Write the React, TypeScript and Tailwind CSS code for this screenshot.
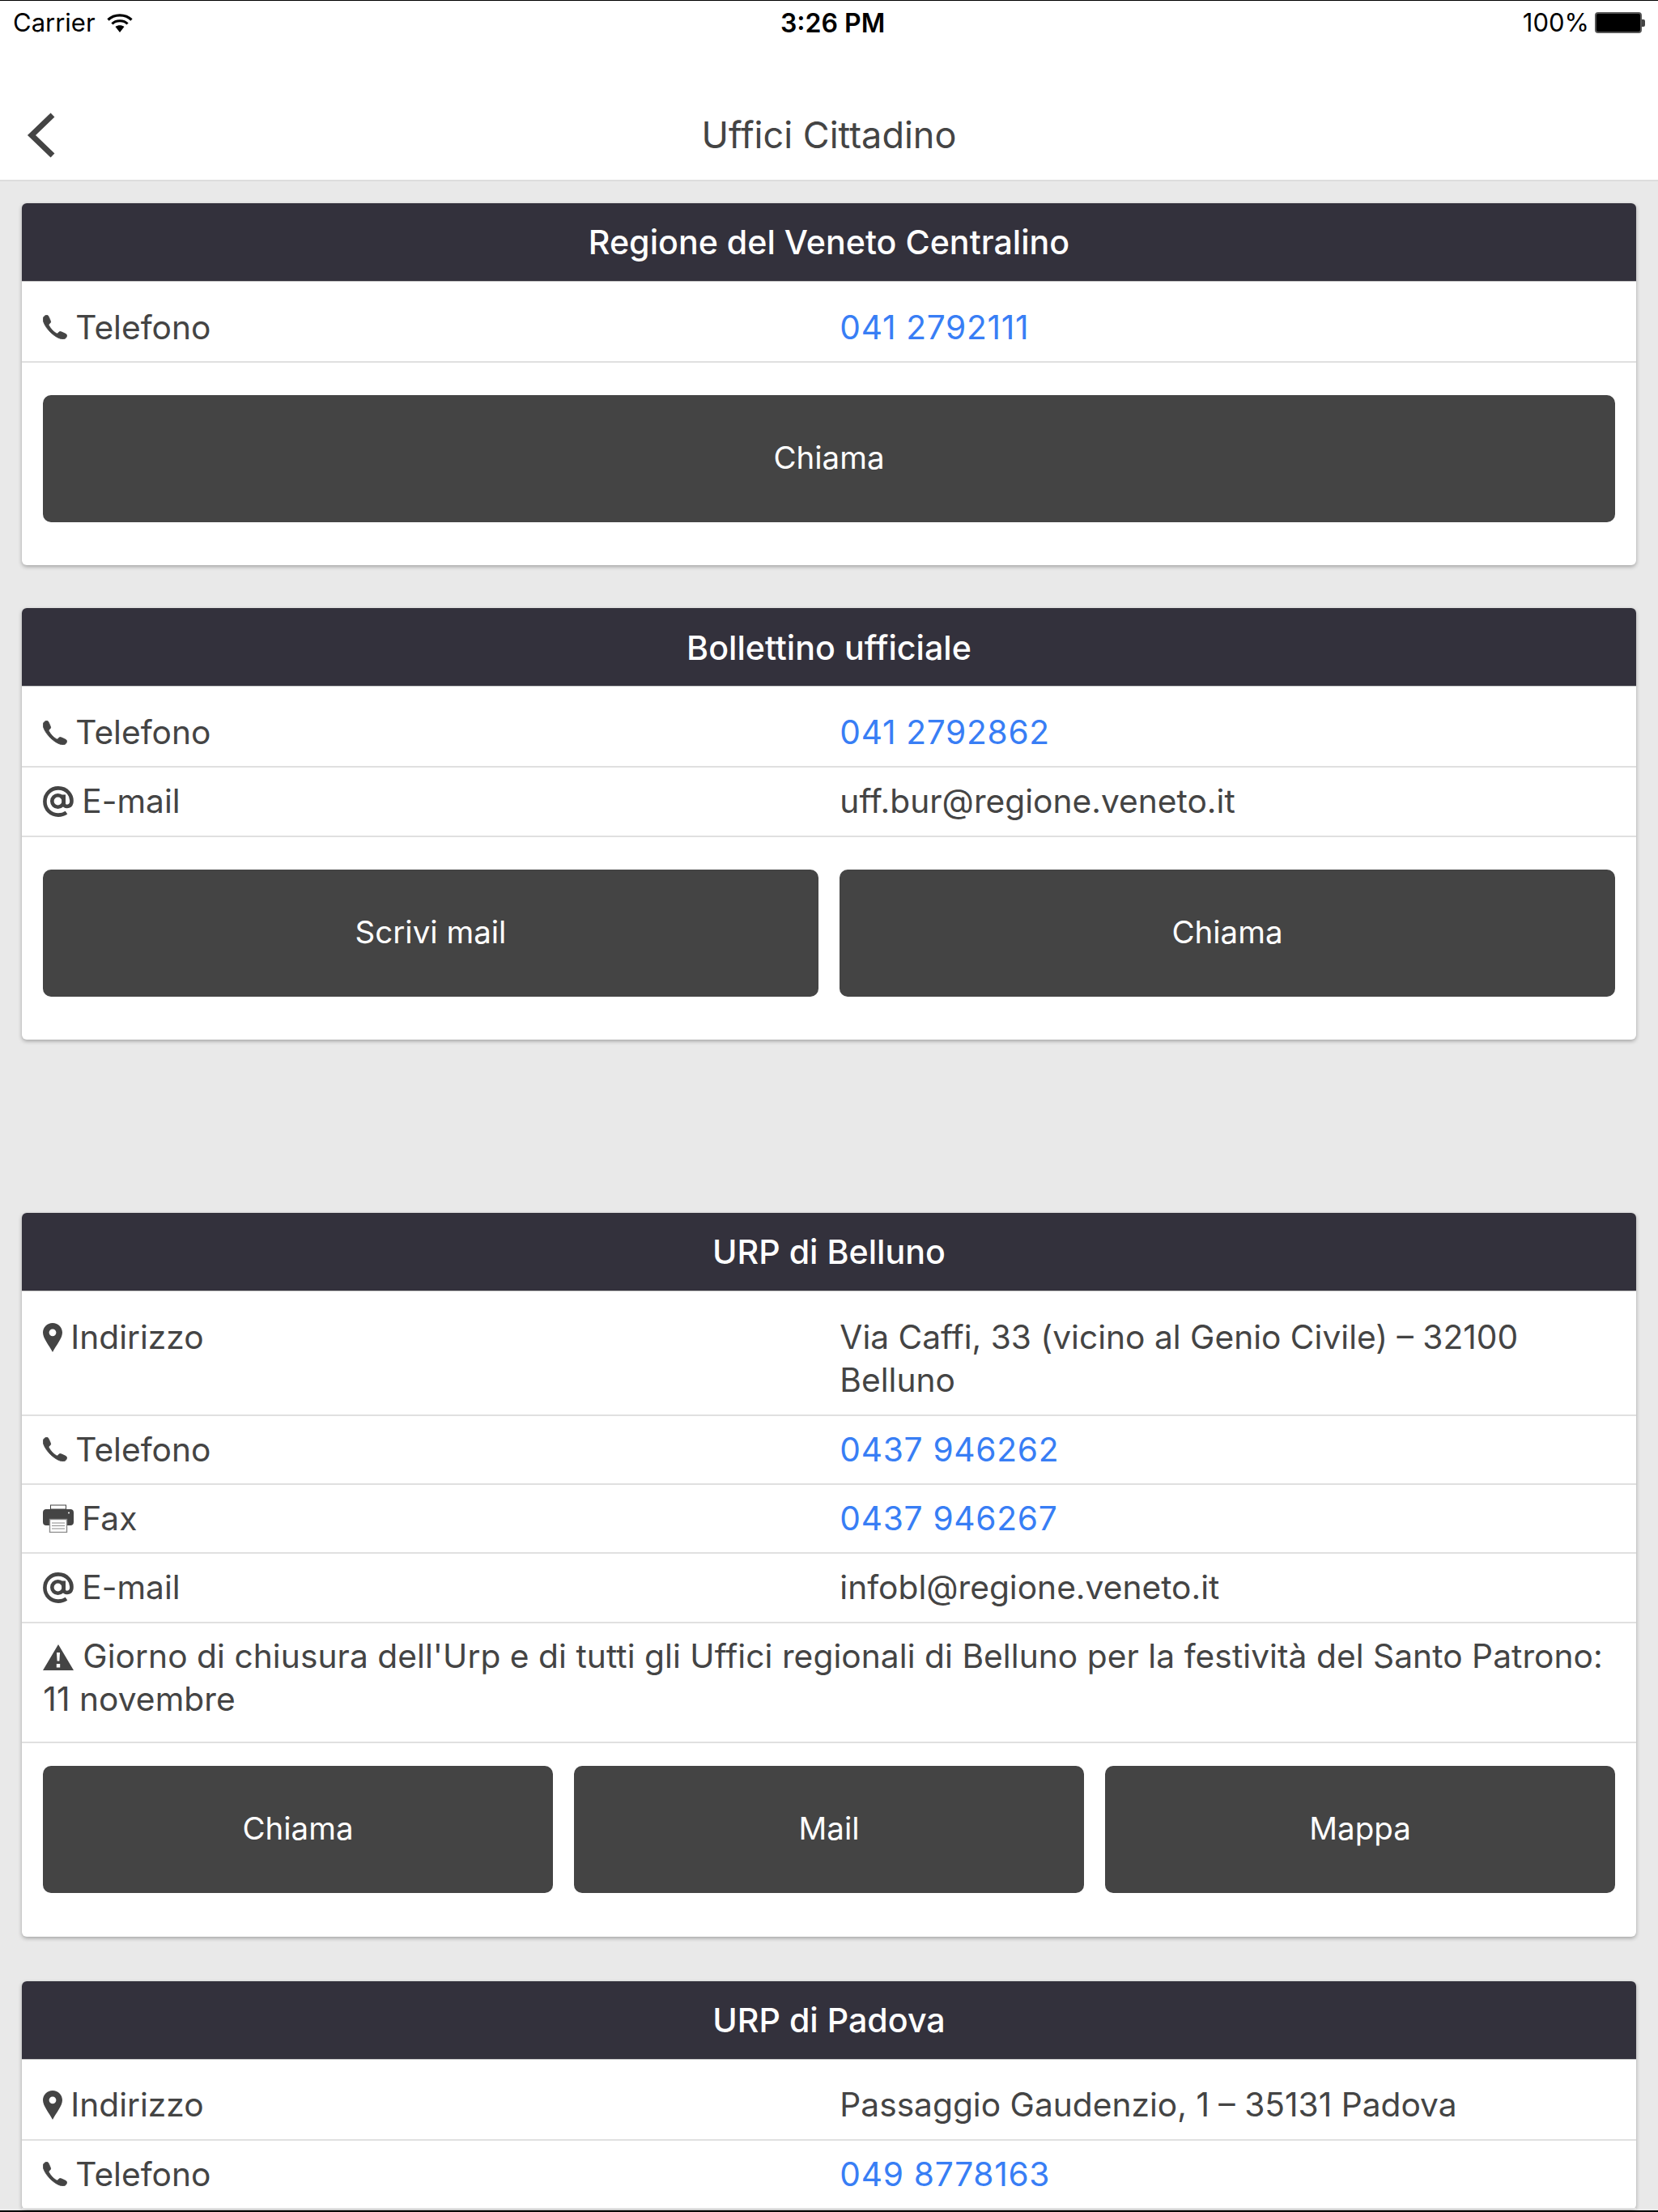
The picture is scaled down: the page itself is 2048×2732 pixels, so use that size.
import React from "react";

const font = "font-['Inter','Liberation_Sans',sans-serif]";

function PhoneIcon() {
  return (
    <svg width="30" height="30" viewBox="0 0 30 30" className="mr-[10px] shrink-0">
      <path
        fill="#444444"
        stroke="#444444"
        strokeWidth="0.8"
        d="M1.4 1.9 C3 0.4 5 -0.4 6.2 0.7 C7.2 1.7 9.2 6.6 9.6 8 C9.9 9.3 8.6 10.3 7.6 11.2 C7 11.8 7.2 12.6 7.6 13.3 C9.4 16.7 12.6 20.2 16.2 22.5 C17.1 23 17.9 23.1 18.6 22.4 C19.5 21.4 20.5 20.3 21.8 20.6 C23.4 21.1 28 23.1 29 24.1 C30.2 25.3 29.4 27.4 27.9 28.8 C26.4 30.2 24.4 30.2 22.4 29.6 C13.4 26.9 3.9 17.6 0.6 8.3 C-0.1 6.1 0 3.3 1.4 1.9 Z"
      />
    </svg>
  );
}

function AtIcon() {
  return (
    <svg width="38" height="38" viewBox="0 0 38 38" fill="none" className="mr-[10px] shrink-0">
      <circle cx="18.5" cy="18.5" r="7.2" stroke="#444444" strokeWidth="4.6" />
      <path
        d="M25.7 10.5 V21.5 C25.7 26 33.8 26.5 35.2 20.8 C36.9 11 29.5 2.4 19 2.4 C9.8 2.4 2.4 9.6 2.4 19 C2.4 28.4 9.8 35.6 19 35.6 C22.6 35.6 26 34.6 29 32.6"
        stroke="#444444"
        strokeWidth="4.6"
      />
    </svg>
  );
}

function PinIcon() {
  return (
    <svg width="24" height="36" viewBox="0 0 24 36" className="mr-[10px] shrink-0">
      <path
        fillRule="evenodd"
        fill="#444444"
        d="M12 0 C18.8 0 24 5.2 24 11.8 C24 19 16.5 27.5 12 36 C7.5 27.5 0 19 0 11.8 C0 5.2 5.2 0 12 0 Z M12 7.4 A4.4 4.4 0 1 0 12 16.2 A4.4 4.4 0 1 0 12 7.4 Z"
      />
    </svg>
  );
}

function FaxIcon() {
  return (
    <svg width="38" height="35" viewBox="0 0 38 35" className="mr-[10px] shrink-0">
      <path fill="#444444" d="M9 0.5 H29 V6 H9 Z M10 1.5 V5.5 H28 V1.5 Z" fillRule="evenodd" />
      <path fill="#444444" d="M4 6 H34 C36.4 6 38 7.6 38 10 V22 C38 24.4 36.4 26 34 26 H4 C1.6 26 0 24.4 0 22 V10 C0 7.6 1.6 6 4 6 Z" />
      <rect x="8.5" y="18.5" width="21" height="16" fill="#ffffff" stroke="#8a8a8a" strokeWidth="1.4" />
      <path d="M11 23 H27 M11 26.5 H27 M11 30 H27" stroke="#8a8a8a" strokeWidth="1.2" />
      <circle cx="32" cy="10.5" r="1" fill="#ffffff" />
    </svg>
  );
}

function WarnIcon() {
  return (
    <svg width="38" height="32" viewBox="0 0 38 32" className="mr-[11px] inline-block align-[-3px]">
      <path
        fillRule="evenodd"
        fill="#444444"
        d="M19 0 L38 32 H0 Z M17 10 L17.6 20.5 H20.4 L21 10 Z M16.8 24 V28.5 H21.2 V24 Z"
      />
    </svg>
  );
}

function Row({
  icon,
  label,
  value,
  link,
  first,
}: {
  icon: React.ReactNode;
  label: string;
  value: string;
  link?: boolean;
  first?: boolean;
}) {
  return (
    <div
      className={`grid grid-cols-2 gap-[26.67px] border-b-2 border-[#e0e0e0] px-[26.67px] ${first ? "pt-[29.67px] pb-[15px]" : "pt-[15px] pb-[15px]"} text-[40.7px] leading-[53.33px] text-[#444444]`}
    >
      <div className="flex items-start">
        <span className="flex h-[53.33px] items-center">{icon}</span>
        <span>{label}</span>
      </div>
      <div className={link ? "text-[#387ef5] tracking-[0.7px]" : ""}>{value}</div>
    </div>
  );
}

function Btn({ children }: { children: React.ReactNode }) {
  return (
    <div className="flex h-[157px] flex-1 items-center justify-center rounded-[10px] bg-[#444444] pb-[1px] text-[38.5px] text-white">
      {children}
    </div>
  );
}

function Card({ title, children }: { title: string; children: React.ReactNode }) {
  return (
    <div className="rounded-[6px] bg-white shadow-[0_2px_5px_rgba(0,0,0,0.3)]">
      <div className="flex h-[97px] items-center justify-center rounded-t-[6px] border-b border-[#c8c8c8] bg-[#33313c] pt-[2px] text-[41.2px] font-medium text-white">
        {title}
      </div>
      {children}
    </div>
  );
}

export default function App() {
  return (
    <div className={`${font} flex h-[2732px] w-[2048px] flex-col overflow-hidden border-t border-b-2 border-t-black border-b-black bg-[#e9e9e9]`}>
      <div className="relative h-[223px] shrink-0 border-b-2 border-[#dddddd] bg-white">
        <div className="flex h-[54px] items-center justify-between pl-[16px] pr-[16px] text-[31px] text-black">
          <div className="flex items-center gap-[14px]">
            <span>Carrier</span>
            <svg width="32" height="25" viewBox="0 0 32 25" fill="none">
              <path d="M1.5 8.5 C9 1 23 1 30.5 8.5" stroke="#000" strokeWidth="3.2" />
              <path d="M6.5 13.5 C11 8.5 21 8.5 25.5 13.5" stroke="#000" strokeWidth="3.2" />
              <path d="M10.5 17 C13.5 14.5 18.5 14.5 21.5 17 L16 24 Z" fill="#000" />
            </svg>
          </div>
          <span className="absolute left-[964px] top-[4px] text-[32px] font-semibold">3:26 PM</span>
          <div className="flex items-center gap-[7px]">
            <span>100%</span>
            <div className="flex items-center">
              <div className="h-[26px] w-[58px] rounded-[4px] border-2 border-[#555] bg-black" />
              <div className="h-[9px] w-[4px] rounded-r-[2px] bg-[#444]" />
            </div>
          </div>
        </div>
        <div className="flex h-[167px] items-center justify-center pt-[56px] text-[45px] text-[#444444]">
          Uffici Cittadino
        </div>
        <svg className="absolute left-[33px] top-[138px]" width="36" height="56" viewBox="0 0 36 56" fill="none">
          <path d="M32 3 L6 28 L32 53" stroke="#444444" strokeWidth="7" />
        </svg>
      </div>
      <div className="flex flex-col px-[26.67px] pt-[27px]">
        <Card title="Regione del Veneto Centralino">
          <Row first icon={<PhoneIcon />} label="Telefono" value="041 2792111" link />
          <div className="flex gap-[26.67px] px-[26.67px] pt-[40px] pb-[53.5px]">
            <Btn>Chiama</Btn>
          </div>
        </Card>
        <div className="mt-[53px]">
          <Card title="Bollettino ufficiale">
            <Row first icon={<PhoneIcon />} label="Telefono" value="041 2792862" link />
            <Row icon={<AtIcon />} label="E-mail" value="uff.bur@regione.veneto.it" />
            <div className="flex gap-[26.67px] px-[26.67px] pt-[40px] pb-[53.5px]">
              <Btn>Scrivi mail</Btn>
              <Btn>Chiama</Btn>
            </div>
          </Card>
        </div>
        <div className="mt-[214px]">
          <Card title="URP di Belluno">
            <Row first icon={<PinIcon />} label="Indirizzo" value="Via Caffi, 33 (vicino al Genio Civile) – 32100 Belluno" />
            <Row icon={<PhoneIcon />} label="Telefono" value="0437 946262" link />
            <Row icon={<FaxIcon />} label="Fax" value="0437 946267" link />
            <Row icon={<AtIcon />} label="E-mail" value="infobl@regione.veneto.it" />
            <div className="border-b-2 border-[#e0e0e0] px-[26.67px] pt-[14px] pb-[26px] text-[40.7px] leading-[53.33px] tracking-[0.05px] text-[#444444]">
              <WarnIcon />
              Giorno di chiusura dell'Urp e di tutti gli Uffici regionali di Belluno per la festività del Santo Patrono: 11 novembre
            </div>
            <div className="flex gap-[26.67px] px-[26.67px] pt-[28px] pb-[54px]">
              <Btn>Chiama</Btn>
              <Btn>Mail</Btn>
              <Btn>Mappa</Btn>
            </div>
          </Card>
        </div>
        <div className="mt-[54.5px]">
          <Card title="URP di Padova">
            <Row first icon={<PinIcon />} label="Indirizzo" value="Passaggio Gaudenzio, 1 – 35131 Padova" />
            <Row icon={<PhoneIcon />} label="Telefono" value="049 8778163" link />
          </Card>
        </div>
      </div>
    </div>
  );
}
